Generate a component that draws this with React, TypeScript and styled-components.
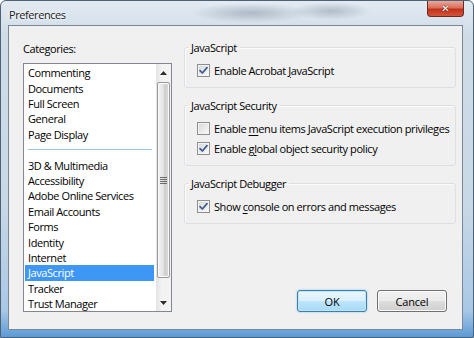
import React from 'react'
import styled, { createGlobalStyle } from 'styled-components'

const GlobalStyle = createGlobalStyle`
  html, body {
    margin: 0;
    padding: 0;
    background: #ffffff;
  }
  body {
    font-family: "Open Sans", "Noto Sans", sans-serif;
    font-size: 11px;
    letter-spacing: -0.42px;
    color: #000;
  }
`

const topCategories = ['Commenting', 'Documents', 'Full Screen', 'General', 'Page Display']
const bottomCategories = [
  '3D & Multimedia',
  'Accessibility',
  'Adobe Online Services',
  'Email Accounts',
  'Forms',
  'Identity',
  'Internet',
  'JavaScript',
  'Tracker',
  'Trust Manager',
  'Units',
]

const CheckMark = () => (
  <svg width="9" height="9" viewBox="0 0 9 9">
    <path d="M1 4.6 L3.4 7 L8 1.6" fill="none" stroke="#3d5a8e" strokeWidth="1.7" strokeLinecap="round" strokeLinejoin="round" />
  </svg>
)

const Arrow: React.FC<{ down?: boolean }> = ({ down }) => (
  <svg width="7" height="4" viewBox="0 0 7 4">
    <path d={down ? 'M0 0 H7 L3.5 4 Z' : 'M0 4 H7 L3.5 0 Z'} fill="#2c2c2c" />
  </svg>
)

const Option: React.FC<{ checked?: boolean; children: React.ReactNode }> = ({ checked, children }) => (
  <OptionRow>
    <Box>{checked && <CheckMark />}</Box>
    <span>{children}</span>
  </OptionRow>
)

const App: React.FC = () => {
  return (
    <>
      <GlobalStyle />
      <Window>
        <TitleBar>
          <Title>Preferences</Title>
          <CloseButton>✕</CloseButton>
        </TitleBar>
        <Client>
          <Sidebar>
            <Label>Categories:</Label>
            <ListBox>
              <Items>
                {topCategories.map((c) => (
                  <Item key={c}>{c}</Item>
                ))}
                <Separator />
                {bottomCategories.map((c) => (
                  <Item key={c} selected={c === 'JavaScript'}>
                    {c}
                  </Item>
                ))}
              </Items>
              <ScrollBar>
                <ArrowButton>
                  <Arrow />
                </ArrowButton>
                <Track>
                  <Thumb>
                    <Grip />
                  </Thumb>
                </Track>
                <ArrowButton>
                  <Arrow down />
                </ArrowButton>
              </ScrollBar>
            </ListBox>
          </Sidebar>
          <Content>
            <Group>
              <Legend>JavaScript</Legend>
              <Option checked>
                Enable Acrobat <u>J</u>avaScript
              </Option>
            </Group>
            <Group>
              <Legend>JavaScript Security</Legend>
              <Option>
                Enable <u>m</u>enu items JavaScript execution privileges
              </Option>
              <Option checked>
                Enable g<u>l</u>obal object security policy
              </Option>
            </Group>
            <Group>
              <Legend>JavaScript Debugger</Legend>
              <Option checked>
                Show <u>c</u>onsole on errors and messages
              </Option>
            </Group>
            <Footer>
              <Button primary>OK</Button>
              <Button>Cancel</Button>
            </Footer>
          </Content>
        </Client>
      </Window>
    </>
  )
}

export default App

const Window = styled.div`
  width: 474px;
  height: 338px;
  box-sizing: border-box;
  display: flex;
  flex-direction: column;
  border: 1px solid #4f6275;
  border-radius: 6px 6px 0 0;
  background:
    radial-gradient(ellipse 60px 10px at 250px 12px, rgba(90, 105, 125, 0.35), transparent),
    radial-gradient(ellipse 40px 9px at 330px 10px, rgba(80, 95, 115, 0.3), transparent),
    linear-gradient(180deg, #e3ebf2 0%, #cfdce8 10%, #c9d8e6 60%, #a9c8e6 92%, #5d9ad6 100%);
  overflow: hidden;
`

const TitleBar = styled.div`
  height: 24px;
  display: flex;
  justify-content: space-between;
  align-items: flex-start;
  padding: 0 9px 0 8px;
`

const Title = styled.div`
  font-size: 11px;
  line-height: 13px;
  margin-top: 7px;
  color: #1a1a1a;
  text-shadow: 0 0 6px #ffffff, 0 0 3px #ffffff;
`

const CloseButton = styled.div`
  width: 37px;
  height: 16px;
  box-sizing: border-box;
  border: 1px solid #6d2a22;
  border-top: none;
  border-radius: 0 0 4px 4px;
  background: linear-gradient(180deg, #e9a99c 0%, #d9705c 45%, #c0321a 55%, #d6533b 100%);
  color: #ffffff;
  font-family: "DejaVu Sans", sans-serif;
  font-size: 10px;
  font-weight: bold;
  letter-spacing: 0;
  line-height: 15px;
  text-align: center;
  text-shadow: 0 0 2px #5a1208;
`

const Client = styled.div`
  flex: 1;
  min-width: 0;
  margin: 0 10px 7px 7px;
  display: flex;
  background: #f0f0f0;
  border: 1px solid #7a8896;
`

const Sidebar = styled.div`
  display: flex;
  flex-direction: column;
  padding: 15px 0 0 14px;
`

const Label = styled.div`
  line-height: 15px;
  margin-bottom: 7px;
`

const ListBox = styled.div`
  width: 149px;
  height: 249px;
  box-sizing: border-box;
  display: flex;
  background: #ffffff;
  border: 1px solid #828790;
`

const Items = styled.div`
  flex: 1;
  overflow: hidden;
  padding: 1.3px 1px 0 1px;
`

const Item = styled.div<{ selected?: boolean }>`
  height: 15.4px;
  line-height: 15.4px;
  padding-left: 3px;
  white-space: nowrap;
  background: ${(p) => (p.selected ? '#3f97f5' : 'transparent')};
  color: ${(p) => (p.selected ? '#ffffff' : '#000000')};
`

const Separator = styled.div`
  height: 15.4px;
  display: flex;
  align-items: center;
  padding: 0 2px 0 3px;

  &::after {
    content: '';
    flex: 1;
    height: 1px;
    background: #9cc3e2;
  }
`

const ScrollBar = styled.div`
  width: 15px;
  margin-left: 1px;
  display: flex;
  flex-direction: column;
  background: linear-gradient(90deg, #e3e3e3, #f3f3f3 40%, #f3f3f3);
`

const ArrowButton = styled.div`
  height: 17px;
  display: flex;
  align-items: center;
  justify-content: center;
`

const Track = styled.div`
  flex: 1;
  padding: 1px 0;
  display: flex;
  flex-direction: column;
`

const Thumb = styled.div`
  height: 196px;
  margin: 0 1px;
  box-sizing: border-box;
  border: 1px solid #9a9a9a;
  border-radius: 2px;
  background: linear-gradient(90deg, #f4f4f4 0%, #e2e2e2 50%, #cfcfcf 55%, #d8d8d8 100%);
  box-shadow: inset 0 0 0 1px #fafafa;
  display: flex;
  align-items: center;
  justify-content: center;
`

const Grip = styled.div`
  width: 7px;
  height: 7px;
  background: repeating-linear-gradient(180deg, #6a6a6a 0 1px, transparent 1px 2px);
`

const Content = styled.div`
  flex: 1;
  min-width: 0;
  display: flex;
  flex-direction: column;
  padding: 14px 0 0 12px;
`

const Group = styled.fieldset`
  width: 272px;
  min-width: 0;
  box-sizing: border-box;
  margin: 0 0 10px 0;
  padding: 5px 0 7px 0;
  border: 1px solid #dcdfe3;
  border-radius: 3px;
  box-shadow: inset 1px 1px 0 #fbfbfb;
  display: flex;
  flex-direction: column;
`

const Legend = styled.legend`
  padding: 0 3px 0 3px;
  margin-left: 3px;
  line-height: 15px;
`

const OptionRow = styled.label`
  height: 20px;
  display: flex;
  align-items: center;
  gap: 4px;
  padding-left: 12px;
  white-space: nowrap;

  u {
    text-underline-offset: 2px;
  }
`

const Box = styled.div`
  flex-shrink: 0;
  width: 13px;
  height: 13px;
  box-sizing: border-box;
  border: 1px solid #8f8f8f;
  background: linear-gradient(135deg, #d3d6da 0%, #f0f0f0 70%, #fbfbfb 100%);
  box-shadow: inset 0 0 0 1px #f4f4f4;
  display: flex;
  align-items: center;
  justify-content: center;
`

const Footer = styled.div`
  margin-top: auto;
  display: flex;
  justify-content: flex-end;
  gap: 10px;
  padding: 0 15px 17px 0;
`

const Button = styled.button<{ primary?: boolean }>`
  width: 70px;
  height: 22px;
  padding: 0;
  font-family: inherit;
  font-size: 11px;
  letter-spacing: -0.2px;
  color: #000;
  border-radius: 3px;
  border: 1px solid ${(p) => (p.primary ? '#3c7fb1' : '#707070')};
  background: ${(p) =>
    p.primary
      ? 'linear-gradient(180deg, #eaf6fd 0%, #d9f0fc 50%, #bee6fd 51%, #a7d9f5 100%)'
      : 'linear-gradient(180deg, #f2f2f2 0%, #ebebeb 50%, #dddddd 51%, #cfcfcf 100%)'};
  box-shadow: ${(p) => (p.primary ? 'inset 0 0 0 1px #c4e5f6, 0 0 2px #6fc1ea' : 'inset 0 0 0 1px #fbfbfb')};
`
